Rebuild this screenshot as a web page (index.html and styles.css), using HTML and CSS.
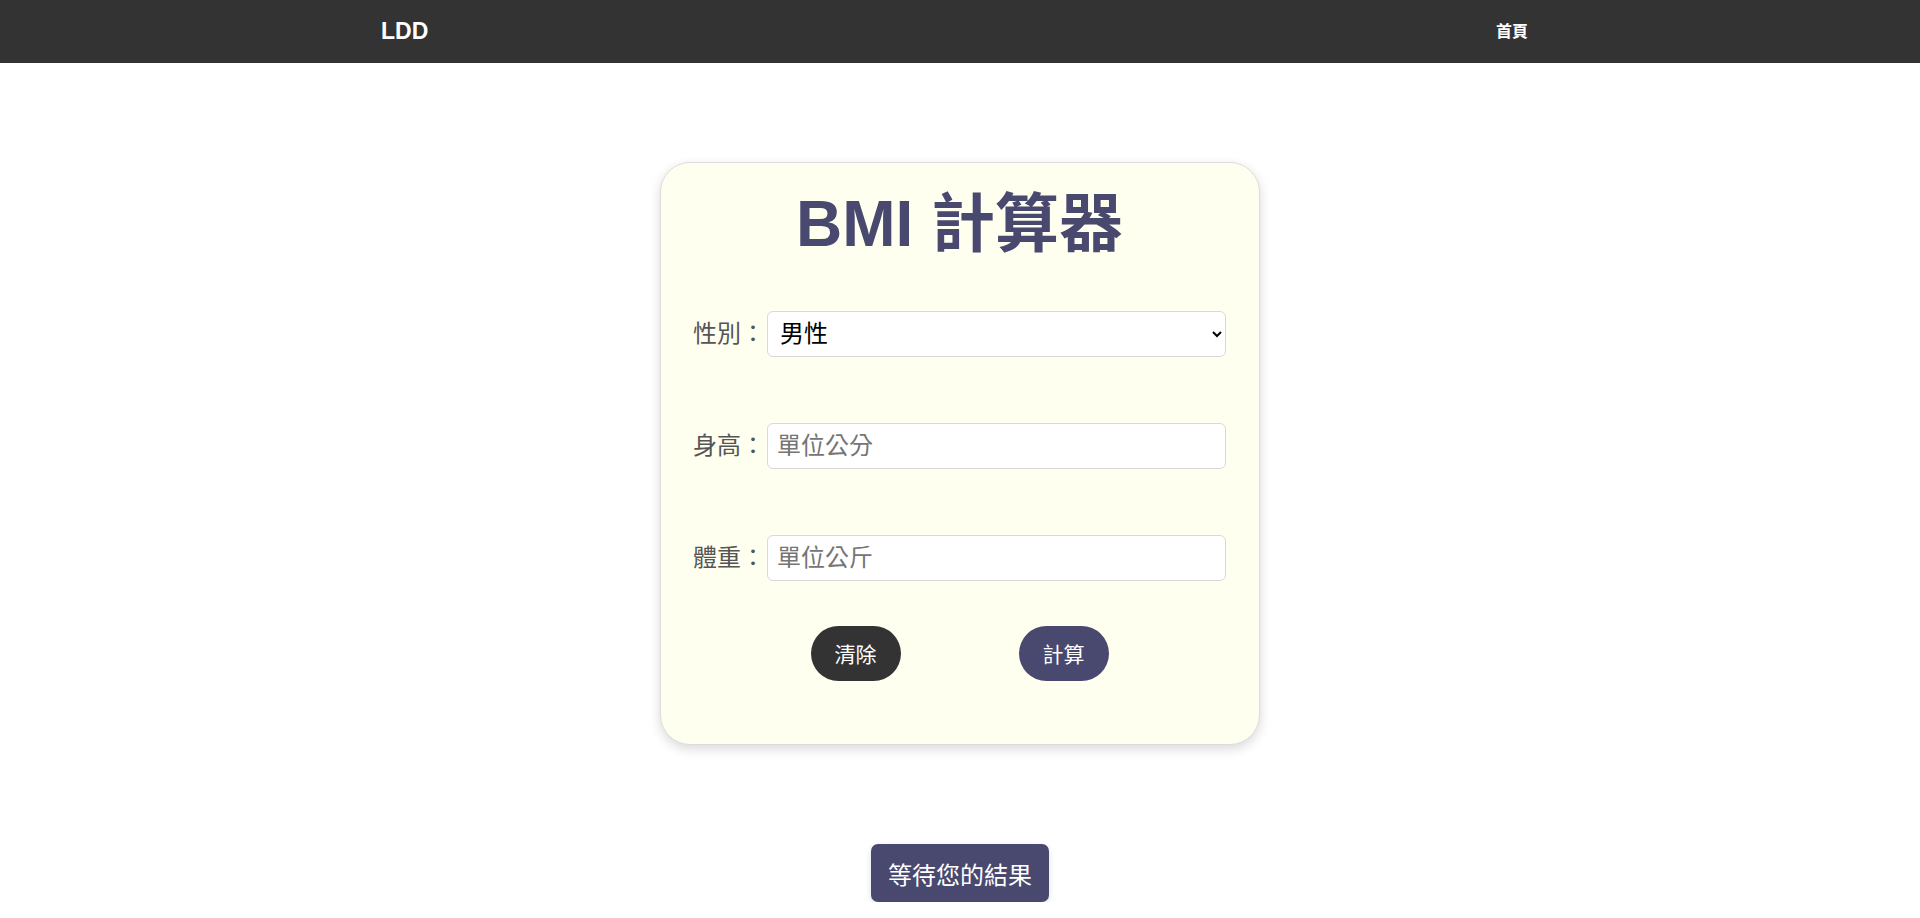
FILE: index.html
```html
<!DOCTYPE html>
<html lang="zh-Hant">
<head>
<meta charset="utf-8">
<title>BMI 計算器</title>
<link rel="stylesheet" href="styles.css">
</head>
<body>
<nav class="navbar">
  <div class="nav-inner">
    <a class="brand" href="#">LDD</a>
    <ul class="nav-links">
      <li><a href="#">首頁</a></li>
    </ul>
  </div>
</nav>
<main class="page">
  <section class="card">
    <h1 class="title">BMI 計算器</h1>
    <form class="form">
      <div class="row">
        <label class="label" for="gender">性別：</label>
        <select id="gender" class="field select">
          <option>男性</option>
          <option>女性</option>
        </select>
      </div>
      <div class="row">
        <label class="label" for="height">身高：</label>
        <input id="height" class="field" type="text" placeholder="單位公分">
      </div>
      <div class="row">
        <label class="label" for="weight">體重：</label>
        <input id="weight" class="field" type="text" placeholder="單位公斤">
      </div>
      <div class="actions">
        <button type="button" class="btn btn-dark">清除</button>
        <button type="button" class="btn btn-primary">計算</button>
      </div>
    </form>
  </section>
  <div class="result">等待您的結果</div>
</main>
</body>
</html>
```

FILE: styles.css
```css
* {
  box-sizing: border-box;
}

html, body {
  margin: 0;
  padding: 0;
  background: #ffffff;
  font-family: "Liberation Sans", "Noto Sans CJK TC", sans-serif;
}

.navbar {
  background: #333333;
  height: 63px;
}

.nav-inner {
  width: 1160px;
  margin: 0 auto;
  height: 100%;
  display: flex;
  align-items: center;
  justify-content: space-between;
  padding-left: 1px;
}

.brand {
  color: #ffffff;
  text-decoration: none;
  font-weight: bold;
  font-size: 23px;
  line-height: 1;
}

.nav-links {
  list-style: none;
  margin: 0;
  padding: 0;
  display: flex;
  margin-right: 12px;
}

.nav-links a {
  color: #ffffff;
  text-decoration: none;
  font-weight: bold;
  font-size: 16px;
  line-height: 1;
}

.page {
  display: flex;
  flex-direction: column;
  align-items: center;
  padding-top: 99px;
}

.card {
  width: 600px;
  height: 583px;
  background: #fffff0;
  border: 1px solid #dcdcdc;
  border-radius: 30px;
  box-shadow: 0 4px 12px rgba(0, 0, 0, 0.15);
  padding: 0 33px 0 32px;
}

.title {
  margin: 23px 0 48px;
  text-align: center;
  font-size: 64px;
  line-height: 1.2;
  font-weight: bold;
  color: #494970;
}

.form {
  display: flex;
  flex-direction: column;
}

.row {
  display: flex;
  align-items: center;
  gap: 2px;
  height: 46px;
  margin-bottom: 66px;
}

.row:nth-child(3) {
  margin-bottom: 45px;
}

.label {
  font-size: 24px;
  line-height: 1;
  color: #555555;
  white-space: nowrap;
}

.field {
  flex: 1;
  height: 46px;
  font-family: "Liberation Sans", "Noto Sans CJK TC", sans-serif;
  font-size: 24px;
  color: #000000;
  background: #ffffff;
  border: 1px solid #d8d8d8;
  border-radius: 6px;
  padding: 0 9px;
  outline: none;
}

.field::placeholder {
  color: #757575;
}

.select {
  padding-left: 8px;
}

.actions {
  display: flex;
  justify-content: center;
  gap: 118px;
}

.btn {
  width: 90px;
  height: 55px;
  border: none;
  border-radius: 28px;
  color: #ffffff;
  font-family: "Liberation Sans", "Noto Sans CJK TC", sans-serif;
  font-size: 21px;
  padding: 0;
  cursor: pointer;
}

.btn-dark {
  background: #333333;
}

.btn-primary {
  background: #494970;
}

.result {
  margin-top: 99px;
  width: 178px;
  height: 58px;
  display: flex;
  align-items: center;
  justify-content: center;
  background: #494970;
  color: #ffffff;
  font-size: 24px;
  border-radius: 7px;
  box-shadow: 0 2px 6px rgba(0, 0, 0, 0.12);
}
```
